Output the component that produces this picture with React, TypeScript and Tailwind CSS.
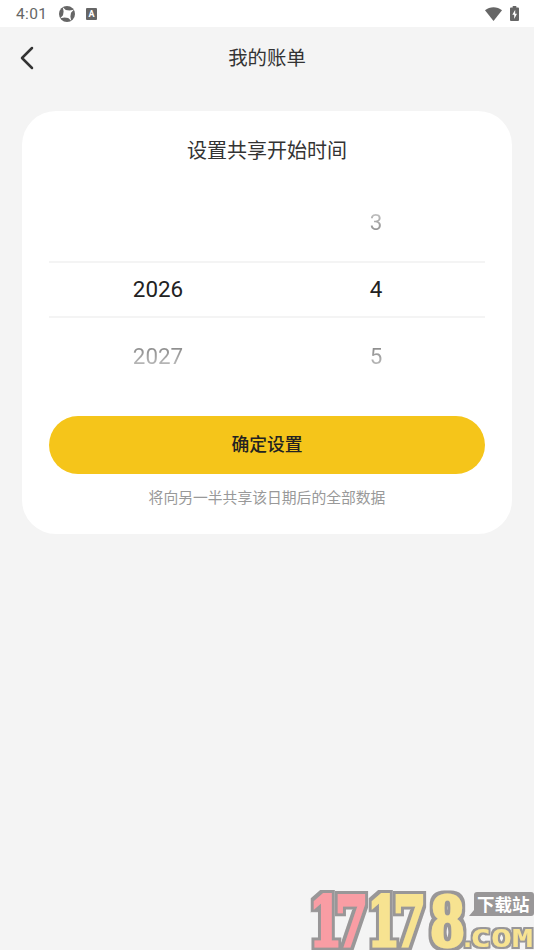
/**
 * Shared bill settings — picks the month from which data is shared.
 */

interface PickerColumnProps {
  previous?: string;
  selected: string;
  next: string;
  className: string;
}

/**
 * One wheel of the date picker, with its neighbours faded out.
 */
function PickerColumn({ previous, selected, next, className }: PickerColumnProps) {
  return (
    <div className={`flex flex-col text-center text-[22.4px] leading-[65px] ${className}`}>
      <span className="h-[67px] bg-linear-to-b from-[#c0c0c0] from-35% to-[#8c8c8c] to-65% bg-clip-text text-transparent">
        {previous}
      </span>
      <span className="h-[67px] text-[#222222]">{selected}</span>
      <span className="h-[67px] bg-linear-to-b from-[#8c8c8c] from-35% to-[#c0c0c0] to-65% bg-clip-text text-transparent">
        {next}
      </span>
    </div>
  );
}

function StatusBar() {
  return (
    <div className="flex h-[27px] items-center bg-white pl-[16px] pr-[15px] text-[#666666]">
      <span className="w-[43px] pt-[2px] text-[15.5px] leading-none tracking-[0.35px]">4:01</span>
      <svg className="h-4 w-4" viewBox="0 0 16 16" aria-hidden="true">
        <circle cx="8" cy="8" r="8" fill="currentColor" />
        <path
          d="M3.8 1.2 6.8 4 10.5 4.6 14.8 3.8 12 6.8 11.4 10.5 12.2 14.8 9.200 12 5.500 11.400 1.200 12.200 4 9.200 4.600 5.500z"
          fill="white"
        />
      </svg>
      <span className="ml-[11px] mt-px flex h-[12px] w-[11px] items-center justify-center rounded-[1px] bg-[#666666] text-[9px] font-bold leading-none text-white">
        A
      </span>
      <svg className="ml-auto h-[14px] w-[17px]" viewBox="0 0 17 14" aria-hidden="true">
        <path d="M0 3.3C4.8-.9 12.2-.9 17 3.3L8.5 14z" fill="currentColor" />
      </svg>
      <svg className="-mt-px ml-[8px] h-[15px] w-[9px]" viewBox="0 0 9 15" aria-hidden="true">
        <path d="M2.7 0h3.6v1.6H8q1 0 1 1V14q0 1-1 1H1q-1 0-1-1V2.6q0-1 1-1h1.7z" fill="currentColor" />
        <path d="M5.2 3.7 2.3 8.7h1.9V13L7 7.7H5.2z" fill="white" />
      </svg>
    </div>
  );
}

/**
 * Site mark pinned to the bottom right corner.
 */
function SiteMark() {
  return (
    <svg
      className="absolute bottom-0 right-0 h-[64px] w-[226px]"
      viewBox="308 886 226 64"
      role="img"
      aria-label="17178.COM 下载站"
    >
      <defs>
        <filter id="outline" filterUnits="userSpaceOnUse" x="300" y="880" width="240" height="76">
          <feMorphology in="SourceAlpha" operator="dilate" radius="3" result="grown" />
          <feFlood floodColor="#999798" />
          <feComposite in2="grown" operator="in" result="edge" />
          <feMerge>
            <feMergeNode in="edge" />
            <feMergeNode in="SourceGraphic" />
          </feMerge>
        </filter>
        <filter id="thin-outline" filterUnits="userSpaceOnUse" x="300" y="880" width="240" height="76">
          <feMorphology in="SourceAlpha" operator="dilate" radius="2" result="grown" />
          <feFlood floodColor="#999798" />
          <feComposite in2="grown" operator="in" result="edge" />
          <feMerge>
            <feMergeNode in="edge" />
            <feMergeNode in="SourceGraphic" />
          </feMerge>
        </filter>
      </defs>
      <g fontFamily="'DejaVu Serif', serif" fontWeight="700" fontSize="70" strokeWidth="3">
        <g fill="#f99da4" stroke="#f99da4" filter="url(#outline)">
          <text x="309" y="945.5" textLength="33" lengthAdjust="spacingAndGlyphs">1</text>
          <text x="335" y="945.5" textLength="33" lengthAdjust="spacingAndGlyphs">7</text>
        </g>
        <g fill="#f7e391" stroke="#f7e391" filter="url(#outline)">
          <text x="367" y="945.5" textLength="33" lengthAdjust="spacingAndGlyphs">1</text>
          <text x="393" y="945.5" textLength="33" lengthAdjust="spacingAndGlyphs">7</text>
          <text x="430" y="945.5" textLength="35" lengthAdjust="spacingAndGlyphs">8</text>
        </g>
      </g>
      <g fill="#f7e391" fontSize="25" fontWeight="700" fontFamily="'DejaVu Sans Mono', monospace" filter="url(#thin-outline)">
        <text x="460" y="947">.</text>
        <text x="470" y="947" textLength="63" lengthAdjust="spacingAndGlyphs">COM</text>
      </g>
      <path d="M477 892h54q3 0 3 3v18q0 3-3 3h-62l5-6v-15q0-3 3-3z" fill="#999798" />
      <text x="477" y="911" fill="white" fontSize="17.5" fontWeight="700" fontFamily="'Noto Sans CJK SC', sans-serif">
        下载站
      </text>
    </svg>
  );
}

export default function App() {
  return (
    <div className="relative h-[950px] w-[534px] overflow-hidden bg-[#f4f4f4] font-[Roboto,'Noto_Sans_CJK_SC',sans-serif] text-[#333333]">
      <StatusBar />

      <header className="grid h-[62px] grid-cols-[60px_1fr_60px] items-center">
        <button type="button" className="pl-[20px]" aria-label="返回">
          <svg className="h-6 w-[14px]" viewBox="0 0 14 24" aria-hidden="true">
            <path d="M12 2 2 12l10 10" fill="none" stroke="#333333" strokeWidth="2.5" strokeLinecap="round" strokeLinejoin="round" />
          </svg>
        </button>
        <h1 className="pt-[2px] text-center text-[19.4px] leading-none">我的账单</h1>
      </header>

      <main className="mx-[22px] mt-[22px] flex h-[422.5px] flex-col rounded-[34px] bg-white px-[27px] pt-[26px]">
        <h2 className="text-center text-[20px] leading-[28px]">设置共享开始时间</h2>

        <div className="mt-[25px] grid h-[201px] grid-cols-1">
          <div className="col-start-1 row-start-1 mt-[70.5px] h-[57.5px] border-y-2 border-[#f4f4f4]" />
          <div className="col-start-1 row-start-1 flex">
            <PickerColumn selected="2026" next="2027" className="w-1/2" />
            <PickerColumn previous="3" selected="4" next="5" className="w-1/2" />
          </div>
        </div>

        <button type="button" className="mt-[25px] h-[58px] shrink-0 rounded-full bg-[#f5c51a] text-[17.8px] font-medium text-[#222222]">
          确定设置
        </button>
        <p className="mt-[14px] text-center text-[14.8px] leading-[20px] text-[#999999]">
          将向另一半共享该日期后的全部数据
        </p>
      </main>

      <SiteMark />
    </div>
  );
}
